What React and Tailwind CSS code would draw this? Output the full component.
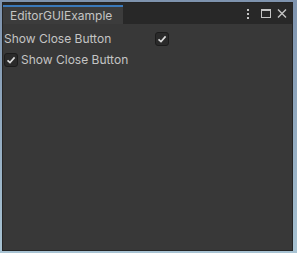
function Toggle() {
  return (
    <div className="w-[14px] h-[14px] rounded-[3px] bg-[#2a2a2a] border border-[#1c1c1c] flex items-center justify-center shrink-0">
      <svg width="10" height="10" viewBox="0 0 10 10">
        <path d="M1.5 5.3 L4 7.6 L8.6 2.4" fill="none" stroke="#dcdcdc" strokeWidth="1.6" />
      </svg>
    </div>
  );
}

export default function App() {
  return (
    <div
      className="w-[297px] h-[253px] pl-[2px] pt-[2px] bg-gradient-to-b from-[#7e93ae] to-[#a8c3d3]"
      style={{ fontFamily: "Inter, 'Noto Sans', sans-serif" }}
    >
      <div className="w-[291px] h-[249px] border border-[#242424] bg-[#383838] flex flex-col">
        {/* Tab header */}
        <div className="h-[21px] bg-[#282828] flex items-end shrink-0">
          <div className="w-[120px] h-[19px] bg-[#3c3c3c] border-t-2 border-[#3a79bb] flex items-center pl-[7px]">
            <span className="text-[12px] text-[#c4c4c4] leading-none">EditorGUIExample</span>
          </div>
          <div className="flex-1 h-full flex items-center justify-end pr-[5px]">
            <svg width="4" height="10" viewBox="0 0 4 10">
              <rect x="1" y="0" width="2" height="2" fill="#c4c4c4" />
              <rect x="1" y="4" width="2" height="2" fill="#c4c4c4" />
              <rect x="1" y="8" width="2" height="2" fill="#c4c4c4" />
            </svg>
            <svg width="10" height="9" viewBox="0 0 10 9" className="ml-[11px]">
              <rect x="0.5" y="0.5" width="9" height="8" fill="none" stroke="#c4c4c4" />
              <rect x="0" y="0" width="10" height="2" fill="#c4c4c4" />
            </svg>
            <svg width="10" height="9" viewBox="0 0 10 9" className="ml-[6px]">
              <path d="M1 0.5 L9 8.5 M9 0.5 L1 8.5" stroke="#c4c4c4" strokeWidth="1.4" />
            </svg>
          </div>
        </div>
        {/* Content */}
        <div className="pt-[8px] pl-[1px] flex flex-col gap-[7px] text-[12px] text-[#c4c4c4]">
          <div className="h-[14px] flex items-center">
            <span className="w-[151px] leading-none">Show Close Button</span>
            <Toggle />
          </div>
          <div className="h-[14px] flex items-center gap-[3px]">
            <Toggle />
            <span className="leading-none">Show Close Button</span>
          </div>
        </div>
      </div>
    </div>
  );
}
